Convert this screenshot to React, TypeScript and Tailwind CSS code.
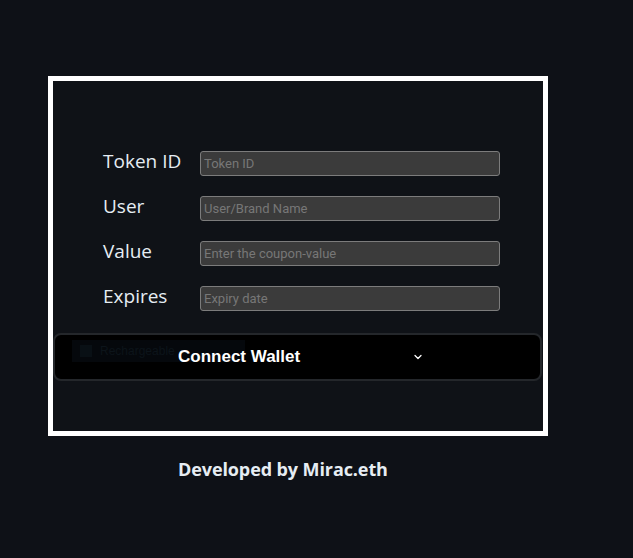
export default function App() {
  const fields = [
    { label: "Token ID", placeholder: "Token ID" },
    { label: "User", placeholder: "User/Brand Name" },
    { label: "Value", placeholder: "Enter the coupon-value" },
    { label: "Expires", placeholder: "Expiry date" },
  ];

  return (
    <div className="min-h-screen w-full bg-[#0e1117] pt-[76px] pl-[48px]">
      <div className="w-[500px] h-[360px] border-[5px] border-white bg-[#0f1217]">
        <div className="pt-[70px] pl-[50px] flex flex-col gap-[20px]">
          {fields.map((f) => (
            <div key={f.label} className="flex items-center h-[25px]">
              <label className="w-[97px] text-[19px] text-[#e6edf3] font-['Open_Sans',sans-serif] -mt-[5px]">
                {f.label}
              </label>
              <input
                placeholder={f.placeholder}
                className="w-[300px] h-[25px] bg-[#3b3b3b] border border-[#7c7c7c] rounded-[3px] px-[3px] text-[13px] text-white placeholder:text-[#777777] outline-none font-['Roboto',sans-serif]"
              />
            </div>
          ))}
        </div>

        <div className="relative mt-[22px] h-[48px] w-[489px] rounded-lg border-2 border-[#24272b] bg-black flex items-center">
          <div className="absolute left-[17px] top-[5px] w-[173px] h-[22px] bg-[#05080c] flex items-center pl-[8px] gap-[8px]">
            <span className="w-[12px] h-[12px] bg-[#091015]" />
            <span className="text-[12px] text-[#0c141a] font-['Liberation_Sans',sans-serif]">Rechargeable</span>
          </div>
          <span className="relative ml-[123px] text-[17px] font-bold text-white font-['Liberation_Sans',Arial,sans-serif]">
            Connect Wallet
          </span>
          <svg
            className="relative ml-[112px]"
            width="12"
            height="12"
            viewBox="0 0 24 24"
            fill="none"
            stroke="white"
            strokeWidth="2.5"
            strokeLinecap="round"
            strokeLinejoin="round"
          >
            <path d="m6 9 6 6 6-6" />
          </svg>
        </div>
      </div>

      <div className="w-[500px] flex pl-[130px] mt-[20px]">
        <span className="text-[18px] font-bold text-[#e6edf3] font-['Open_Sans',sans-serif] tracking-[-0.1px]">
          Developed by Mirac.eth
        </span>
      </div>
    </div>
  );
}
